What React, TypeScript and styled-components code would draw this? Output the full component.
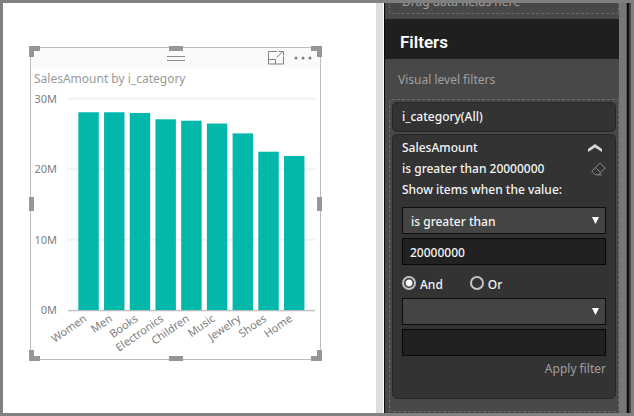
import React, { useState } from "react";
import styled, { createGlobalStyle } from "styled-components";

const GlobalStyle = createGlobalStyle`
  *, *::before, *::after { box-sizing: border-box; }
  body { margin: 0; background: #808080; }
  body, button, input, select {
    font-family: "Noto Sans", "Open Sans", sans-serif;
    font-size: 12px;
  }
`;

const Frame = styled.div`
  display: flex;
  height: 100vh;
  border: 3px solid #808080;
  background: #ffffff;
  overflow: hidden;
`;

const Canvas = styled.main`
  flex: 1;
  min-width: 0;
  padding: 44px 55px 0 27px;
`;

const Gutter = styled.div`
  width: 8px;
  border-right: 1px solid #ffffff;
  background: #dedede;
`;

const Tile = styled.section`
  position: relative;
  border: 1px solid #bdbdbd;
  background: #ffffff;
`;

const TileHeader = styled.header`
  display: grid;
  grid-template-columns: 1fr auto 1fr;
  align-items: center;
  height: 20px;
  padding: 0 8px;
  background: #fafafa;
`;

const Grip = styled.div`
  grid-column: 2;
  width: 18px;
  height: 5px;
  border: solid #8c8c8c;
  border-width: 1px 0;
`;

const TileActions = styled.div`
  display: flex;
  justify-content: flex-end;
  gap: 10px;
`;

const IconButton = styled.button`
  display: flex;
  padding: 0;
  border: 0;
  background: none;
  color: inherit;
`;

const TileTitle = styled.h2`
  margin: 0;
  padding: 0 0 1px 3px;
  color: #999999;
  font-size: 12px;
  font-weight: 400;
  line-height: 21px;
`;

const Chart = styled.svg`
  display: block;
  width: 100%;
  font-family: "Noto Sans", "Open Sans", sans-serif;
  font-size: 11px;
  fill: #808080;
`;

type Side = "start" | "mid" | "end";
const offset = (side: Side, near: string, far: string, length: string) =>
  side === "start"
    ? `${near}: -2px;`
    : side === "end"
    ? `${far}: -2px;`
    : `${near}: calc(50% - ${length});`;

const Handle = styled.span<{ $x: Side; $y: Side }>`
  position: absolute;
  ${(p) => offset(p.$x, "left", "right", "7px")}
  ${(p) => offset(p.$y, "top", "bottom", "7px")}
  width: ${(p) => (p.$x === "mid" ? 14 : p.$y === "mid" ? 5 : 11)}px;
  height: ${(p) => (p.$y === "mid" ? 14 : p.$x === "mid" ? 5 : 11)}px;
  border: 0 solid #969696;
  ${(p) => (p.$x === "start" ? "border-left-width: 5px;" : "")}
  ${(p) => (p.$x === "end" ? "border-right-width: 5px;" : "")}
  ${(p) => (p.$y === "start" ? "border-top-width: 5px;" : "")}
  ${(p) => (p.$y === "end" ? "border-bottom-width: 5px;" : "")}
`;

const Panel = styled.aside`
  display: flex;
  flex-direction: column;
  width: 235px;
  border-left: 1px solid #0a0a0a;
  background: #484848;
`;

const DropZone = styled.div`
  display: flex;
  flex-direction: column;
  justify-content: flex-end;
  height: 11px;
  margin: 0 0 5px 4px;
  padding: 0 0 3px 12px;
  border: 1px dashed #6b6b6b;
  border-top: 0;
  border-radius: 0 0 3px 3px;
  color: #a0a0a0;
  line-height: 16px;
`;

const PanelTitle = styled.h1`
  margin: 0;
  padding: 6px 0 0 15px;
  background: #1f1f1f;
  color: #ffffff;
  font-family: Roboto, sans-serif;
  font-size: 17px;
  font-weight: 600;
  line-height: 34px;
`;

const GroupTitle = styled.h2`
  margin: 0;
  padding: 11px 0 9px 13px;
  color: #a0a0a0;
  font-size: 12px;
  font-weight: 400;
  line-height: 20px;
`;

const FilterList = styled.div`
  display: flex;
  flex-direction: column;
  gap: 2px;
  flex: 1;
  margin: 0 0 1px 4px;
  padding: 2px;
  border: 1px dashed #6b6b6b;
  border-radius: 3px;
`;

const FilterCard = styled.section`
  padding: 0 9px;
  border: 1px solid #262626;
  border-radius: 5px;
  background: #333333;
  color: #f5f5f5;
  font-weight: 500;

  select, input { font-weight: 500; }
`;

const CardName = styled.h3`
  margin: 0;
  font-size: 12px;
  font-weight: 500;
  line-height: 28px;
`;

const CardRow = styled.div`
  display: flex;
  align-items: center;
  justify-content: space-between;
  height: 21px;
`;

const CardBody = styled.form`
  display: flex;
  flex-direction: column;
  gap: 4px;
  padding: 2px 0 21px;
`;

const Prompt = styled.p`
  margin: 0;
  padding-bottom: 2px;
  line-height: 22px;
`;

const SelectBox = styled.div`
  display: grid;
  align-items: center;

  > * { grid-area: 1 / 1; }
  > svg { justify-self: end; margin-right: 7px; pointer-events: none; }
`;

const Select = styled.select`
  appearance: none;
  width: 100%;
  height: 27px;
  padding: 1px 24px 0 8px;
  border: 1px solid #0d0d0d;
  border-radius: 0;
  background: #444444;
  color: #f5f5f5;
`;

const TextInput = styled.input`
  width: 100%;
  height: 27px;
  padding: 1px 7px 0;
  border: 1px solid #080808;
  background: #212121;
  color: #f5f5f5;
`;

const RadioRow = styled.div`
  display: flex;
  gap: 27px;
  height: 25px;
  padding-top: 6px;
`;

const RadioLabel = styled.label`
  display: flex;
  align-items: center;
  gap: 4px;
`;

const Radio = styled.input`
  appearance: none;
  width: 14px;
  height: 14px;
  margin: 0 0 4px;
  border: 2px solid #c4c4c4;
  border-radius: 50%;

  &:checked {
    background: radial-gradient(circle, #ffffff 3px, transparent 4px);
  }
`;

const ApplyButton = styled.button`
  align-self: flex-end;
  padding: 0;
  border: 0;
  background: none;
  color: #a0a0a0;
  line-height: 17px;
`;

const ScrollBar = styled.div`
  width: 8px;
  border-right: 1px solid #555555;
  background: #777777;
`;

const PanelEdge = styled.div`
  width: 4px;
  border-left: 2px solid #101010;
  background: #484848;
`;

const sales = [
  { name: "Women", value: 28.1 },
  { name: "Men", value: 28.1 },
  { name: "Books", value: 28 },
  { name: "Electronics", value: 27.1 },
  { name: "Children", value: 26.9 },
  { name: "Music", value: 26.5 },
  { name: "Jewelry", value: 25.1 },
  { name: "Shoes", value: 22.5 },
  { name: "Home", value: 21.9 },
];

const BASE = 221;
const UNIT = 7.07;

function SalesChart() {
  return (
    <Chart viewBox="0 0 290 270" role="img" aria-label="SalesAmount by i_category">
      {[30, 20, 10, 0].map((tick) => {
        const y = BASE - tick * UNIT;
        return (
          <g key={tick}>
            <text x="26" y={y + 4} textAnchor="end">{tick}M</text>
            <line x1="37" x2="285" y1={y} y2={y} stroke="#f0f0f0" strokeWidth="2" />
          </g>
        );
      })}
      {sales.map(({ name, value }, i) => {
        const x = 47.5 + i * 25.8;
        const end = x + 9;
        return (
          <g key={name}>
            <rect x={x} y={BASE - value * UNIT} width="20.5" height={value * UNIT} fill="#01b8aa" />
            <text x={end} y="231" textAnchor="end" transform={`rotate(-35 ${end} 231)`}>{name}</text>
          </g>
        );
      })}
      <line x1="37" x2="285" y1="221.5" y2="221.5" stroke="#b8b8b8" />
    </Chart>
  );
}

const FocusIcon = () => (
  <svg width="16" height="14" viewBox="0 0 16 14" fill="none" stroke="#808080">
    <path d="M9 .5H.5v12.5h15V5.5M.5 8.5h7V13M8.5 6.5l6.500-6M10.500.5h5v4" />
  </svg>
);

const MoreIcon = () => (
  <svg width="18" height="14" viewBox="0 0 18 14" fill="#808080">
    <circle cx="2" cy="7" r="1.500" />
    <circle cx="9" cy="7" r="1.500" />
    <circle cx="16" cy="7" r="1.500" />
  </svg>
);

const CollapseIcon = () => (
  <svg width="18" height="8" viewBox="0 0 18 8" fill="#d9d9d9">
    <path d="M7 0 14 5v3L7 3.500 0 8V5z" />
  </svg>
);

const EraserIcon = () => (
  <svg width="15" height="14" viewBox="0 0 15 14" fill="none" stroke="#8c8c8c" strokeLinejoin="round">
    <path d="M9 .8 14.200 6 7.500 12.800H4.300L.8 9.300zM4.500 5.500l5.300 5.100M7 12.800h4" />
  </svg>
);

const Arrow = () => (
  <svg width="7" height="7" viewBox="0 0 7 7" fill="#ffffff">
    <path d="M0 0h7L3.500 7z" />
  </svg>
);

const handles: [Side, Side][] = [
  ["start", "start"], ["mid", "start"], ["end", "start"],
  ["start", "mid"], ["end", "mid"],
  ["start", "end"], ["mid", "end"], ["end", "end"],
];

export default function App() {
  const [join, setJoin] = useState("And");
  return (
    <>
      <GlobalStyle />
      <Frame>
        <Canvas>
          <Tile>
            <TileHeader>
              <Grip />
              <TileActions>
                <IconButton type="button" aria-label="Focus mode"><FocusIcon /></IconButton>
                <IconButton type="button" aria-label="More options"><MoreIcon /></IconButton>
              </TileActions>
            </TileHeader>
            <TileTitle>SalesAmount by i_category</TileTitle>
            <SalesChart />
            {handles.map(([x, y]) => <Handle key={x + y} $x={x} $y={y} />)}
          </Tile>
        </Canvas>
        <Gutter />
        <Panel>
          <DropZone>Drag data fields here</DropZone>
          <PanelTitle>Filters</PanelTitle>
          <GroupTitle>Visual level filters</GroupTitle>
          <FilterList>
            <FilterCard>
              <CardName>i_category(All)</CardName>
            </FilterCard>
            <FilterCard>
              <CardBody onSubmit={(e) => e.preventDefault()}>
                <div>
                  <CardRow>
                    <span>SalesAmount</span>
                    <IconButton type="button" aria-label="Collapse filter"><CollapseIcon /></IconButton>
                  </CardRow>
                  <CardRow>
                    <span>is greater than 20000000</span>
                    <IconButton type="button" aria-label="Clear filter"><EraserIcon /></IconButton>
                  </CardRow>
                  <Prompt>Show items when the value:</Prompt>
                </div>
                <SelectBox>
                  <Select aria-label="First condition" defaultValue="is greater than">
                    <option>is greater than</option>
                    <option>is less than</option>
                  </Select>
                  <Arrow />
                </SelectBox>
                <TextInput aria-label="First value" defaultValue="20000000" />
                <RadioRow>
                  {["And", "Or"].map((name) => (
                    <RadioLabel key={name}>
                      <Radio type="radio" name="join" checked={join === name} onChange={() => setJoin(name)} />
                      {name}
                    </RadioLabel>
                  ))}
                </RadioRow>
                <SelectBox>
                  <Select aria-label="Second condition" defaultValue="">
                    <option value=""></option>
                    <option>is greater than</option>
                    <option>is less than</option>
                  </Select>
                  <Arrow />
                </SelectBox>
                <TextInput aria-label="Second value" />
                <ApplyButton type="submit">Apply filter</ApplyButton>
              </CardBody>
            </FilterCard>
          </FilterList>
        </Panel>
        <ScrollBar />
        <PanelEdge />
      </Frame>
    </>
  );
}
